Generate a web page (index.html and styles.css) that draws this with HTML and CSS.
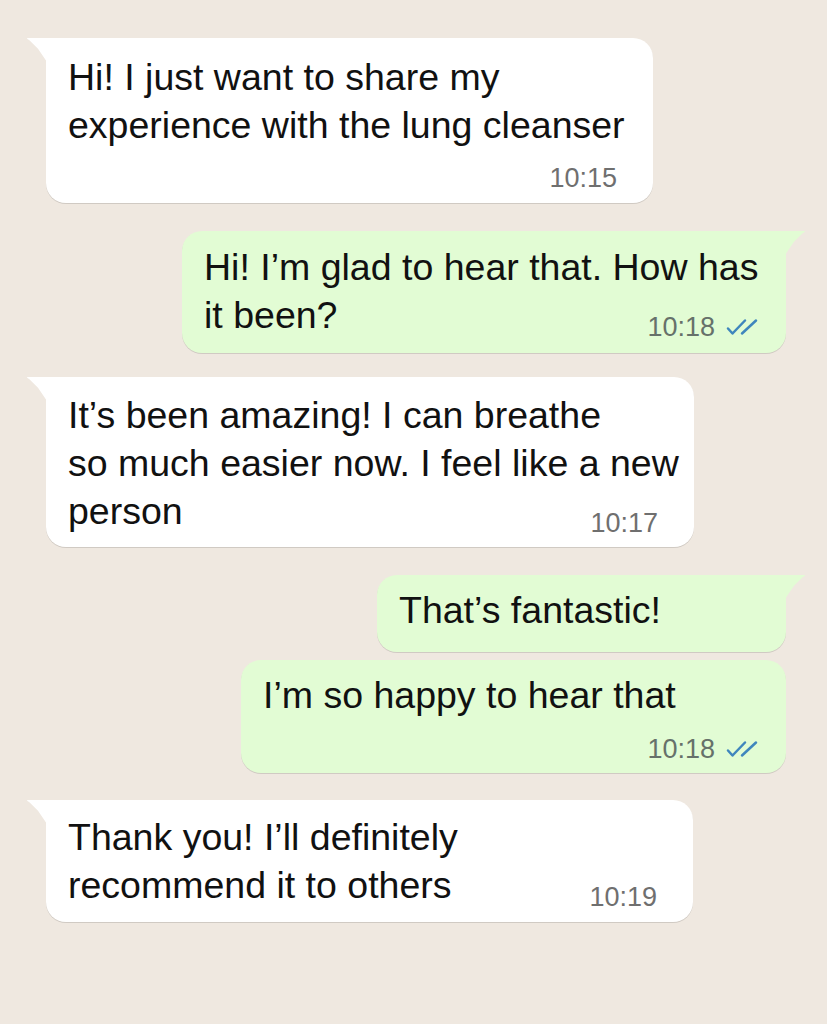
FILE: index.html
```html
<!DOCTYPE html>
<html lang="en">
<head>
<meta charset="utf-8">
<title>Chat</title>
<link rel="stylesheet" href="styles.css">
</head>
<body>
<main class="chat">
  <div class="bubble in tail w1 b1">
    <div class="text">Hi! I just want to share my<br>experience with the lung cleanser</div>
    <div class="meta row"><span class="time">10:15</span></div>
  </div>

  <div class="bubble out tail w2 b2">
    <div class="text">Hi! I’m glad to hear that. How has<br>it been?</div>
    <div class="meta"><span class="time">10:18</span>
      <svg class="ticks" viewBox="0 0 38 18" aria-hidden="true"><path d="M3 10.5 L7.5 15.5 L20 2.5"/><path d="M17 15.5 L31 2.5"/></svg>
    </div>
  </div>

  <div class="bubble in tail w3 b3">
    <div class="text">It’s been amazing! I can breathe<br>so much easier now. I feel like a new<br>person</div>
    <div class="meta"><span class="time">10:17</span></div>
  </div>

  <div class="bubble out tail w4 b4">
    <div class="text">That’s fantastic!</div>
  </div>

  <div class="bubble out w5 b5">
    <div class="text">I’m so happy to hear that</div>
    <div class="meta row"><span class="time">10:18</span>
      <svg class="ticks" viewBox="0 0 38 18" aria-hidden="true"><path d="M3 10.5 L7.5 15.5 L20 2.5"/><path d="M17 15.5 L31 2.5"/></svg>
    </div>
  </div>

  <div class="bubble in tail w6 b6">
    <div class="text">Thank you! I’ll definitely<br>recommend it to others</div>
    <div class="meta"><span class="time">10:19</span></div>
  </div>
</main>
</body>
</html>
```

FILE: styles.css
```css
* { box-sizing: border-box; }

html, body {
  margin: 0;
  padding: 0;
  background: #efe8e0;
}

body {
  width: 827px;
  height: 1024px;
  overflow: hidden;
  font-family: "Liberation Sans", Arial, sans-serif;
  color: #111;
}

.chat {
  display: flex;
  flex-direction: column;
  padding-top: 38px;
}

.bubble {
  position: relative;
  display: grid;
  grid-template-columns: minmax(0, 1fr);
  border-radius: 20px;
  box-shadow: 0 1px 0.5px rgba(0, 0, 0, 0.13);
}

.bubble.in {
  align-self: flex-start;
  margin-left: 46px;
  background: #ffffff;
  padding-left: 22px;
  padding-right: 36px;
}

.bubble.out {
  align-self: flex-end;
  margin-right: 41px;
  background: #e2fcd4;
  padding-left: 22px;
  padding-right: 23px;
}

.bubble.in.tail { border-top-left-radius: 0; }
.bubble.out.tail { border-top-right-radius: 0; }

.bubble.in.tail::before,
.bubble.out.tail::before {
  content: "";
  position: absolute;
  top: 0;
  width: 20px;
  height: 24px;
  background: inherit;
}

.bubble.in.tail::before {
  left: -19px;
  clip-path: polygon(0 0, 100% 0, 100% 100%, 55% 45%, 12% 9%, 2% 4%);
}

.bubble.out.tail::before {
  right: -19px;
  clip-path: polygon(0 0, 100% 0, 98% 4%, 88% 9%, 45% 45%, 0 100%);
}

.text {
  grid-area: 1 / 1;
  font-size: 37.5px;
  line-height: 48px;
  white-space: nowrap;
}

.meta {
  grid-area: 1 / 1;
  align-self: end;
  justify-self: end;
  display: flex;
  align-items: center;
  gap: 10px;
  margin-bottom: -3px;
  font-size: 27px;
  line-height: 30px;
  color: #6f6f6f;
}

.bubble.out .meta { color: #66716a; }

.meta.row {
  grid-area: 2 / 1;
  margin-bottom: 0;
}

.ticks {
  width: 38px;
  height: 18px;
  fill: none;
  stroke: #3f86bd;
  stroke-width: 2.5;
  stroke-linecap: round;
  stroke-linejoin: round;
}

/* widths */
.w1 { width: 607px; }
.w2 { width: 604px; }
.w3 { width: 648px; }
.w4 { width: 409px; }
.w5 { width: 545px; }
.w6 { width: 647px; }

/* vertical spacing per bubble */
.b1 { padding-top: 15px; padding-bottom: 10px; }
.b1 .meta.row { margin-top: 14px; }

.b2 { margin-top: 28px; padding-top: 12px; padding-bottom: 14px; }

.b3 { margin-top: 24px; padding-top: 14px; padding-bottom: 12px; }

.b4 { margin-top: 28px; padding-top: 11px; padding-bottom: 18px; }

.b5 { margin-top: 8px; padding-top: 11px; padding-bottom: 9px; }
.b5 .meta.row { margin-top: 15px; }

.b6 { margin-top: 27px; padding-top: 13px; padding-bottom: 13px; }
```
